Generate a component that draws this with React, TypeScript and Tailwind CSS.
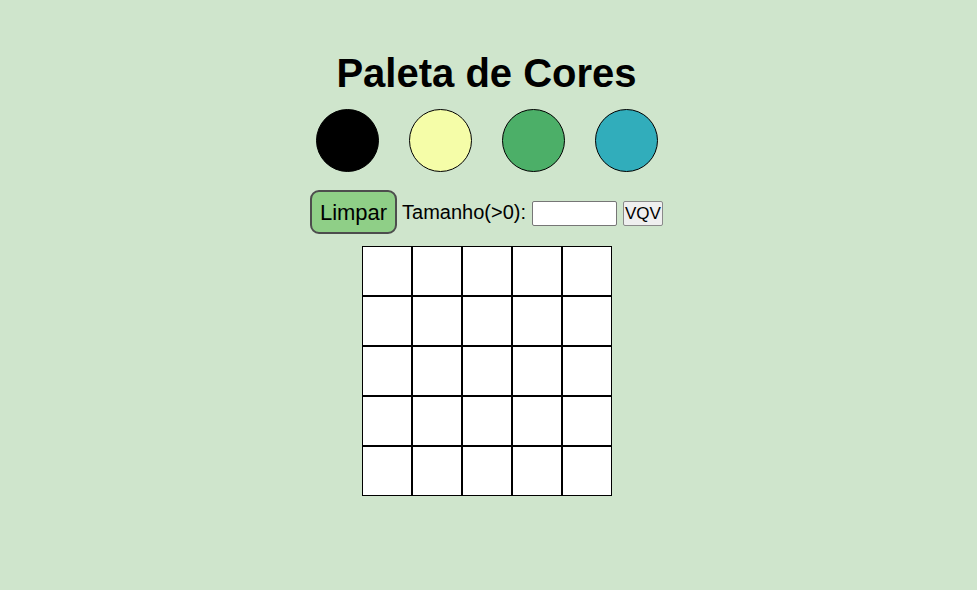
import React from "react";

const colors = ["#000000", "#f5fda8", "#4caf68", "#31adbb"];

export default function App() {
  const cells = Array.from({ length: 25 });
  return (
    <div
      className="min-h-[590px] w-full bg-[#cfe5cc] flex flex-col items-center pt-[50px] pr-[4px]"
      style={{ fontFamily: '"Liberation Sans", Arial, sans-serif' }}
    >
      <h1 className="text-[40px] leading-[46px] font-bold text-black">Paleta de Cores</h1>
      <div className="mt-[13px] flex gap-[30px]">
        {colors.map((c) => (
          <div
            key={c}
            className="w-[63px] h-[63px] rounded-full border border-black"
            style={{ backgroundColor: c }}
          />
        ))}
      </div>
      <div className="mt-[18px] flex items-center h-[44px]">
        <button className="h-[44px] w-[87px] rounded-[9px] border-2 border-[#4d4d4d] bg-[#8fcf87] text-[22px] text-black flex items-center justify-center">
          Limpar
        </button>
        <span className="ml-[5px] text-[20px] text-black leading-none">Tamanho(&gt;0):</span>
        <input
          type="text"
          className="ml-[6px] mt-[2px] w-[85px] h-[25px] border border-[#767676] rounded-[2px] bg-white"
        />
        <button className="ml-[6px] mt-[2px] w-[40px] h-[25px] border border-[#8a8a8a] rounded-[2px] bg-[#efefef] text-[17px] leading-none text-black flex items-center justify-center">
          VQV
        </button>
      </div>
      <div className="mt-[12px] grid grid-cols-[repeat(5,50px)]">
        {cells.map((_, i) => (
          <div key={i} className="w-[50px] h-[50px] border border-black bg-white" />
        ))}
      </div>
    </div>
  );
}
